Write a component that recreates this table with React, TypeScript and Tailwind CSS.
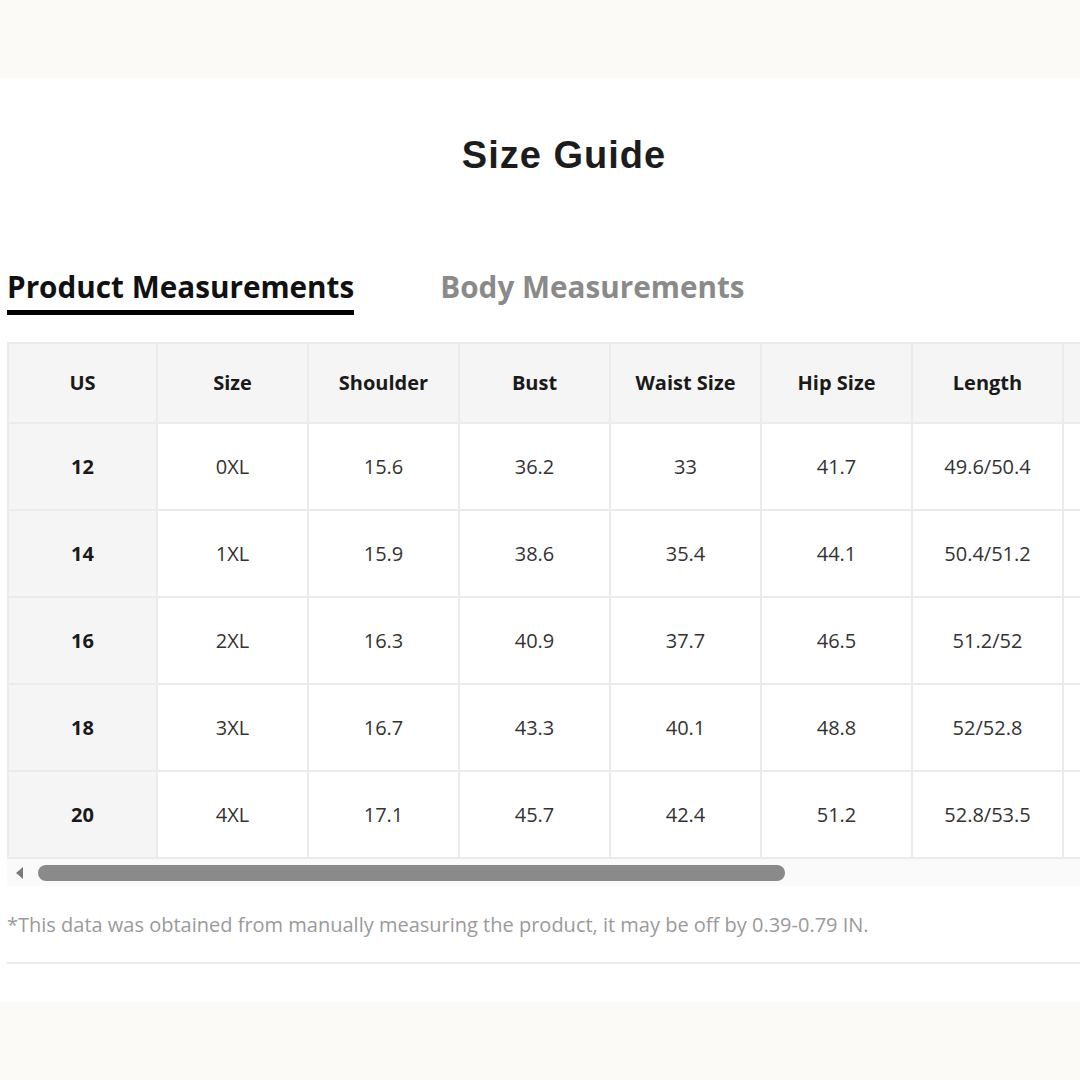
import React from "react";

const headers = ["US", "Size", "Shoulder", "Bust", "Waist Size", "Hip Size", "Length", ""];

const rows = [
  ["12", "0XL", "15.6", "36.2", "33", "41.7", "49.6/50.4", ""],
  ["14", "1XL", "15.9", "38.6", "35.4", "44.1", "50.4/51.2", ""],
  ["16", "2XL", "16.3", "40.9", "37.7", "46.5", "51.2/52", ""],
  ["18", "3XL", "16.7", "43.3", "40.1", "48.8", "52/52.8", ""],
  ["20", "4XL", "17.1", "45.7", "42.4", "51.2", "52.8/53.5", ""],
];

function Cell({ first, header, children }: { first: boolean; header?: boolean; children: React.ReactNode }) {
  return (
    <div
      className={
        "flex shrink-0 items-center justify-center border-r-2 border-[#ebebeb] " +
        (first ? "w-[149px] " : "w-[151px] ") +
        (header || first ? "bg-[#f5f5f5] font-bold text-[#1a1a1a] " : "bg-white text-[#333] ")
      }
    >
      {children}
    </div>
  );
}

export default function App() {
  return (
    <div className="w-[1080px] h-[1080px] overflow-hidden flex flex-col bg-[#fbfaf7] font-['Open_Sans','Noto_Sans',sans-serif]">
      <div className="h-[78px] shrink-0" />

      <div className="h-[924px] shrink-0 overflow-hidden bg-white">
        <div className="w-[1121px] pl-[7px]">
          {/* title */}
          <h1 className="mt-[58px] text-center text-[38px] leading-[38px] font-bold tracking-[1px] text-[#1c1c1c] font-['Liberation_Sans',Arial,sans-serif]">
            Size Guide
          </h1>

          {/* tabs */}
          <div className="mt-[95px] flex gap-[86px] text-[29.7px] leading-[36px] font-bold">
            <div className="flex flex-col">
              <span className="text-[#111]">Product Measurements</span>
              <div className="mt-[5px] h-[5px] bg-black" />
            </div>
            <span className="text-[#8a8a8a]">Body Measurements</span>
          </div>

          {/* table */}
          <div className="mt-[27px] overflow-hidden border-l-2 border-t-2 border-[#ebebeb] text-[20px]">
            <div className="flex h-[80px] border-b-2 border-[#ebebeb]">
              {headers.map((h, i) => (
                <Cell key={i} first={i === 0} header>
                  {h}
                </Cell>
              ))}
            </div>
            {rows.map((r) => (
              <div key={r[0]} className="flex h-[87px] border-b-2 border-[#ebebeb]">
                {r.map((v, i) => (
                  <Cell key={i} first={i === 0}>
                    {v}
                  </Cell>
                ))}
              </div>
            ))}
          </div>

          {/* horizontal scrollbar */}
          <div className="flex h-[27px] items-center gap-[14px] bg-[#fafafa] pl-[9px]">
            <svg width="8" height="12" viewBox="0 0 8 12" className="shrink-0">
              <path d="M7 0 L0 6 L7 12 Z" fill="#7a7a7a" />
            </svg>
            <div className="h-[16px] w-[747px] rounded-full bg-[#8a8a8a]" />
          </div>

          {/* footnote */}
          <p className="mt-[26px] text-[20px] leading-[26px] text-[#9a9a9a]">
            *This data was obtained from manually measuring the product, it may be off by 0.39-0.79 IN.
          </p>

          <div className="mt-[24px] h-[2px] bg-[#ebebeb]" />
        </div>
      </div>

      <div className="flex-1" />
    </div>
  );
}
